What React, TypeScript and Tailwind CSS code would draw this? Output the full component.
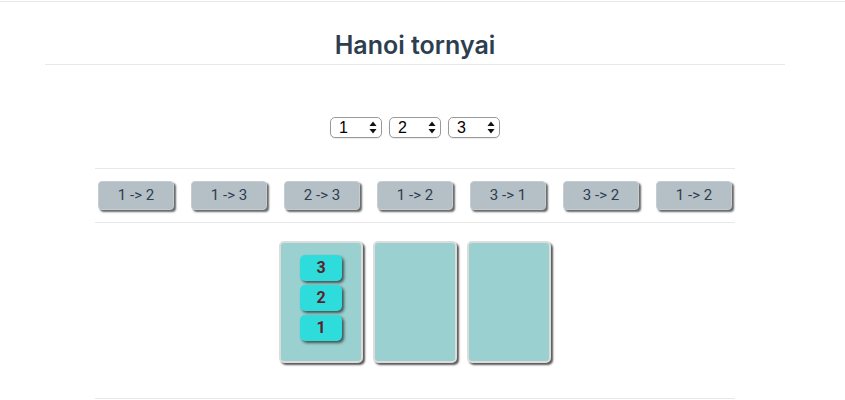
import React from "react";

const moves = ["1 -> 2", "1 -> 3", "2 -> 3", "1 -> 2", "3 -> 1", "3 -> 2", "1 -> 2"];

function FakeSelect({ value }: { value: string }) {
  return (
    <div className="flex h-[21px] w-[52px] items-center justify-between rounded-[5px] border border-[#9a9a9a] bg-white pl-[8px] pr-[4px] shadow-[0_1px_1px_rgba(0,0,0,0.08)]">
      <span className="text-[16px] leading-none text-black" style={{ fontFamily: '"Liberation Sans", Arial, sans-serif' }}>
        {value}
      </span>
      <svg width="8" height="13" viewBox="0 0 8 13">
        <path d="M4 0.5 L7.5 5 L0.5 5 Z" fill="#111" />
        <path d="M4 12.5 L7.5 8 L0.5 8 Z" fill="#111" />
      </svg>
    </div>
  );
}

function Disk({ n }: { n: number }) {
  return (
    <div className="flex h-[26px] w-[42px] items-center justify-center rounded-[5px] bg-[#2fdcdc] text-[16px] font-bold text-[#5b1f2e] shadow-[2px_2px_3px_rgba(0,0,0,0.6)]">
      {n}
    </div>
  );
}

function Tower({ disks }: { disks: number[] }) {
  return (
    <div className="flex h-[122px] w-[84px] flex-col items-center gap-[4px] rounded-[5px] border-2 border-[#dcdcdc] bg-[#9bd0d0] pt-[12px] shadow-[2px_2px_2px_rgba(0,0,0,0.65)]">
      {disks.map((d) => (
        <Disk key={d} n={d} />
      ))}
    </div>
  );
}

export default function App() {
  return (
    <div className="h-[400px] w-[845px] overflow-hidden bg-white" style={{ fontFamily: 'Inter, Roboto, sans-serif' }}>
      <div className="mt-[1px] h-px w-full bg-[#e8e8e8]" />
      <div className="w-[830px]">
        <h1 className="mt-[29px] text-center text-[25px] font-semibold leading-[28px] text-[#2c3e50]">Hanoi tornyai</h1>
        <div className="mx-[45px] mt-[5px] h-px bg-[#e8e8e8]" />
        <div className="mt-[52px] flex justify-center gap-[7px]">
          <FakeSelect value="1" />
          <FakeSelect value="2" />
          <FakeSelect value="3" />
        </div>
        <div className="mx-[95px] mt-[30px] h-px bg-[#e8e8e8]" />
        <div className="mt-[12px] flex justify-center gap-[17px]" style={{ fontFamily: 'Roboto, Inter, sans-serif' }}>
          {moves.map((m, i) => (
            <button
              key={i}
              className="h-[29px] w-[76px] rounded-[4px] border border-[#c4cdd2] bg-[#b4bfc6] text-[15px] text-[#2c3e50] shadow-[2px_2px_2px_rgba(0,0,0,0.6)]"
            >
              {m}
            </button>
          ))}
        </div>
        <div className="mx-[95px] mt-[12px] h-px bg-[#e8e8e8]" />
        <div className="mt-[18px] flex justify-center gap-[10px]" style={{ fontFamily: 'Roboto, Inter, sans-serif' }}>
          <Tower disks={[3, 2, 1]} />
          <Tower disks={[]} />
          <Tower disks={[]} />
        </div>
        <div className="mx-[95px] mt-[35px] h-px bg-[#e8e8e8]" />
      </div>
    </div>
  );
}
